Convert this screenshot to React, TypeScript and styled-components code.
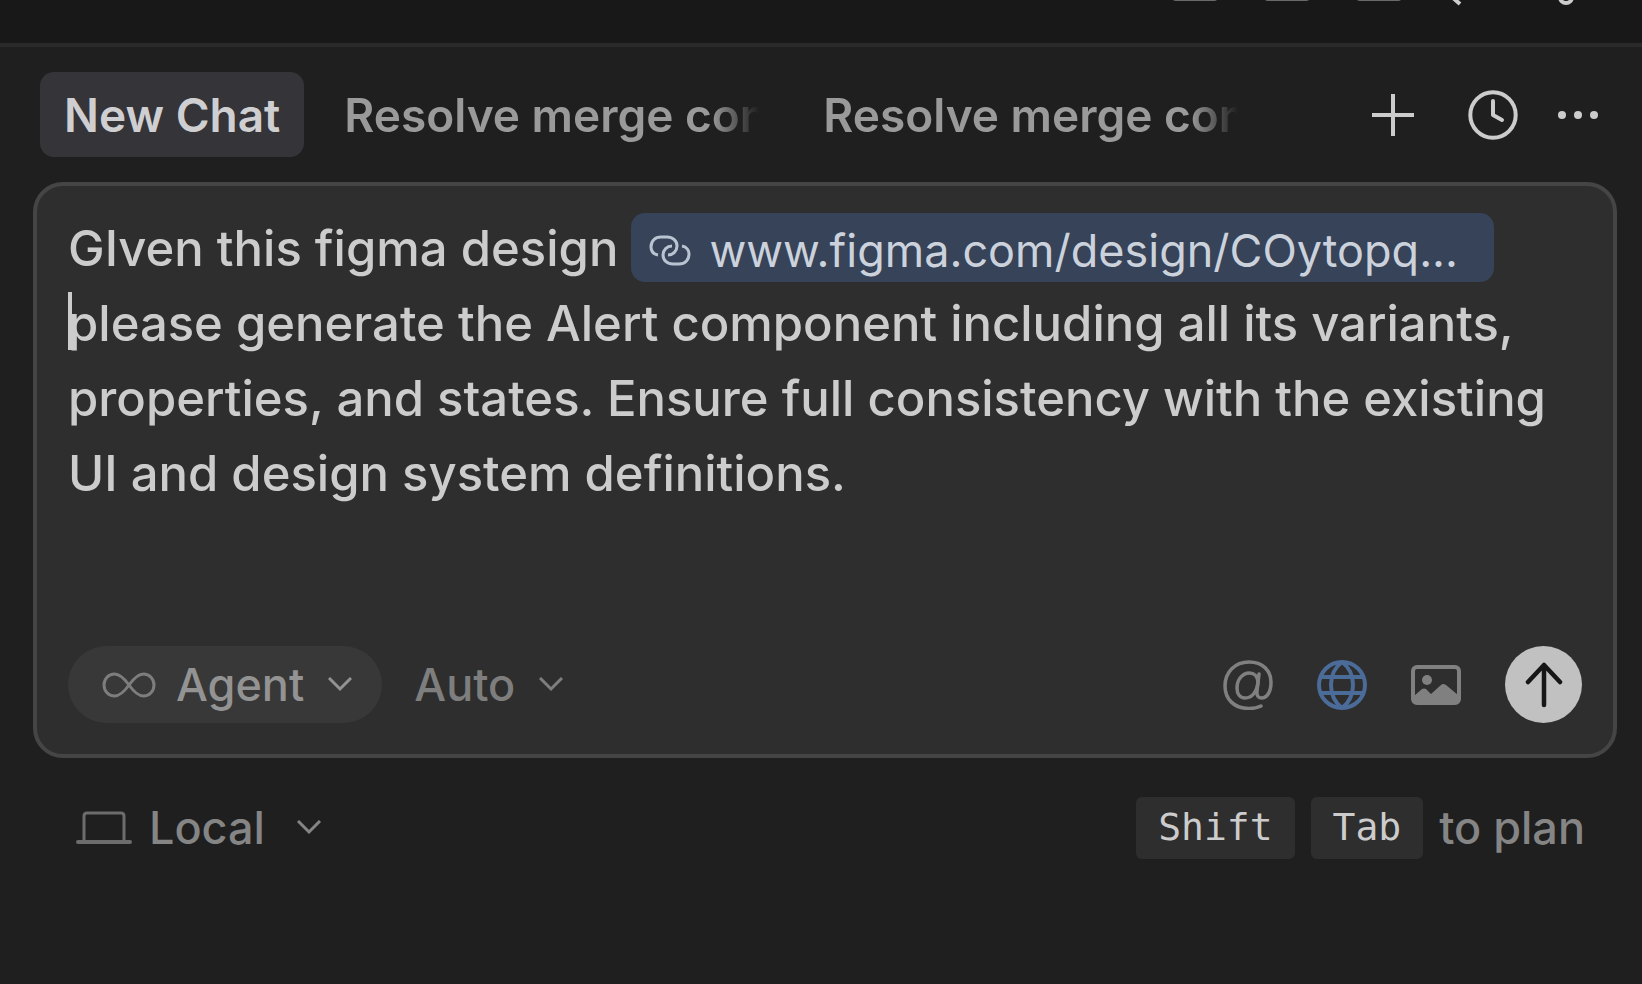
import React from "react";
import styled, { createGlobalStyle } from "styled-components";

const Global = createGlobalStyle`
  *, *::before, *::after { box-sizing: border-box; }
  html, body { margin: 0; background: #1f1f1f; }
  body { font-family: Inter, "Liberation Sans", sans-serif; color: #cccccc; }
  button, select { font: inherit; color: inherit; }
`;

const Page = styled.main`
  min-height: 100vh;
  display: flex;
  flex-direction: column;
  background: #1f1f1f;
`;

const TitleBar = styled.header`
  height: 47px;
  display: flex;
  justify-content: flex-end;
  align-items: flex-start;
  padding-right: 56px;
  background: #181818;
  border-bottom: 4px solid #2a2a2a;
`;

const PlainButton = styled.button<{ $color?: string; $width?: number }>`
  display: flex;
  align-items: center;
  justify-content: center;
  flex: none;
  width: ${(p) => (p.$width ? `${p.$width}px` : "auto")};
  padding: 0;
  border: 0;
  background: none;
  color: ${(p) => p.$color ?? "#cccccc"};
  cursor: pointer;
  svg { display: block; }
`;

const TitleIcons = styled.div`
  display: flex;
  gap: 46px;
`;

const TabBar = styled.nav`
  display: flex;
  align-items: center;
  justify-content: space-between;
  padding: 25px 44px 25px 40px;
`;

const Tabs = styled.div`
  display: flex;
  gap: 16px;
  min-width: 0;
`;

const Tab = styled.button<{ $active?: boolean }>`
  height: 85px;
  padding: 0 24px;
  border: 0;
  border-radius: 14px;
  background: ${(p) => (p.$active ? "#353439" : "transparent")};
  color: ${(p) => (p.$active ? "#cfcfd2" : "#9a9a9a")};
  font-size: 46px;
  font-weight: 600;
  line-height: 56px;
  cursor: pointer;
`;

const FadedLabel = styled.span`
  display: block;
  width: 415px;
  overflow: hidden;
  white-space: nowrap;
  text-align: left;
  mask-image: linear-gradient(to right, #000 calc(100% - 48px), transparent);
`;

const TabActions = styled.div`
  display: flex;
  align-items: center;
  gap: 40px;
`;

const Composer = styled.form`
  display: flex;
  flex-direction: column;
  justify-content: space-between;
  min-height: 576px;
  margin: 0 25px 0 33px;
  padding: 25px 31px 31px;
  border: 4px solid #454545;
  border-radius: 30px;
  background: #2e2e2e;
`;

const Editor = styled.div`
  font-size: 49px;
  font-weight: 500;
  line-height: 75px;
  outline: none;
`;

const Caret = styled.span`
  display: inline-block;
  width: 4px;
  height: 58px;
  margin-right: -4px;
  vertical-align: -9px;
  background: #cccccc;
`;

const LinkChip = styled.a`
  display: inline-flex;
  align-items: center;
  gap: 18px;
  height: 69px;
  margin-top: 2px;
  padding: 6px 36px 0 18px;
  border-radius: 14px;
  background: #364358;
  color: #ccd2dc;
  font-size: 45px;
  font-weight: 400;
  line-height: 63px;
  vertical-align: top;
  text-decoration: none;
`;

const ComposerBar = styled.div`
  display: flex;
  justify-content: space-between;
  align-items: center;
`;

const Group = styled.div<{ $gap: number }>`
  display: flex;
  align-items: center;
  gap: ${(p) => p.$gap}px;
`;

const Picker = styled.label<{ $pill?: boolean; $iconGap?: number; $chevronGap: number; $color: string }>`
  display: flex;
  align-items: center;
  height: 77px;
  padding: ${(p) => (p.$pill ? "0 30px 0 34px" : "0")};
  border-radius: 39px;
  background: ${(p) => (p.$pill ? "#383838" : "transparent")};
  color: ${(p) => p.$color};
  font-size: 45px;
  font-weight: 500;
  svg { flex: none; pointer-events: none; }
  svg:first-child { margin-right: ${(p) => p.$iconGap ?? 20}px; }
  svg:last-child { margin-left: ${(p) => p.$chevronGap}px; }
`;

const Select = styled.select`
  appearance: none;
  field-sizing: content;
  padding: 0;
  border: 0;
  outline: none;
  background: transparent;
  line-height: 56px;
  cursor: pointer;
`;

const SendButton = styled.button`
  display: flex;
  align-items: center;
  justify-content: center;
  width: 77px;
  height: 77px;
  padding: 0;
  border: 0;
  border-radius: 50%;
  background: #c1c1c1;
  color: #161616;
  cursor: pointer;
`;

const Footer = styled.footer`
  display: flex;
  justify-content: space-between;
  align-items: center;
  padding: 31px 57px 0 76px;
`;

const Hint = styled.div`
  display: flex;
  align-items: center;
  gap: 16px;
  color: #858585;
  font-size: 45px;
  font-weight: 500;
`;

const Key = styled.kbd`
  height: 62px;
  padding: 0 22px;
  border-radius: 6px;
  background: #2e2e2e;
  color: #cccccc;
  font-family: "DejaVu Sans Mono", monospace;
  font-size: 38px;
  font-weight: 400;
  line-height: 60px;
`;

const LayoutIcon = () => (
  <svg width="46" height="6" viewBox="0 0 46 6">
    <rect x="0" y="-8" width="46" height="9" rx="4" fill="#6a6a6a" />
  </svg>
);

const Chevron = () => (
  <svg width="24" height="16" viewBox="0 0 24 16" fill="none" stroke="currentColor" strokeWidth="3">
    <path d="M1 1 12 12 23 1" />
  </svg>
);

export default function App() {
  return (
    <Page>
      <Global />
      <TitleBar>
        <TitleIcons>
          <PlainButton aria-label="Toggle left panel"><LayoutIcon /></PlainButton>
          <PlainButton aria-label="Toggle bottom panel"><LayoutIcon /></PlainButton>
          <PlainButton aria-label="Toggle right panel"><LayoutIcon /></PlainButton>
          <PlainButton aria-label="Search">
            <svg width="46" height="6" viewBox="0 0 46 6" fill="none" stroke="currentColor" strokeWidth="4">
              <path d="M4-3 12 4" />
            </svg>
          </PlainButton>
          <PlainButton aria-label="Settings">
            <svg width="46" height="6" viewBox="0 0 46 6" fill="none" stroke="currentColor" strokeWidth="4">
              <circle cx="26" cy="-3" r="6" />
            </svg>
          </PlainButton>
        </TitleIcons>
      </TitleBar>

      <TabBar>
        <Tabs role="tablist">
          <Tab role="tab" aria-selected="true" $active>New Chat</Tab>
          <Tab role="tab" aria-selected="false"><FadedLabel>Resolve merge con</FadedLabel></Tab>
          <Tab role="tab" aria-selected="false"><FadedLabel>Resolve merge con</FadedLabel></Tab>
        </Tabs>
        <TabActions>
          <PlainButton aria-label="New chat" $width={70}>
            <svg width="42" height="42" viewBox="0 0 42 42" stroke="currentColor" strokeWidth="4">
              <path d="M21 0V42M0 21H42" />
            </svg>
          </PlainButton>
          <PlainButton aria-label="History">
            <svg width="50" height="50" viewBox="0 0 50 50" fill="none" stroke="currentColor" strokeWidth="4">
              <circle cx="25" cy="25" r="22.7" />
              <path d="M25 11V25L34 30" strokeLinecap="round" strokeLinejoin="round" />
            </svg>
          </PlainButton>
          <PlainButton aria-label="More">
            <svg width="40" height="8" viewBox="0 0 40 8" fill="currentColor">
              <circle cx="4" cy="4" r="4" /><circle cx="20" cy="4" r="4" /><circle cx="36" cy="4" r="4" />
            </svg>
          </PlainButton>
        </TabActions>
      </TabBar>

      <Composer onSubmit={(e) => e.preventDefault()}>
        <Editor role="textbox" aria-multiline="true" aria-label="Message" contentEditable suppressContentEditableWarning>
          GIven this figma design{" "}
          <LinkChip href="#design" contentEditable={false}>
            <svg width="42" height="32" viewBox="0 0 42 32" fill="none" stroke="#b9c3d1" strokeWidth="3">
              <path d="M9 20C4 19 2 16 2 12C2 6 6 2 12 2H18C24 2 28 6 28 11C28 16 24 20 19 20" />
              <path d="M33 11C38 12 40 16 40 19C40 25 36 29 30 29H24C18 29 14 25 14 20C14 15 18 11 23 11" />
            </svg>
            www.figma.com/design/COytopq...
          </LinkChip>
          <br />
          <Caret />please generate the Alert component including all its variants, properties, and states. Ensure full consistency with the existing UI and design system definitions.
        </Editor>

        <ComposerBar>
          <Group $gap={32}>
            <Picker $pill $chevronGap={24} $color="#939393">
              <svg width="54" height="26" viewBox="0 0 54 26" fill="none" stroke="#7d7d7d" strokeWidth="3">
                <path d="M27 13C22 6 18 2 12.500 2C6.500 2 2 7 2 13S6.500 24 12.500 24C18 24 22 20 27 13C32 6 36 2 41.500 2C47.500 2 52 7 52 13S47.500 24 41.500 24C36 24 32 20 27 13Z" />
              </svg>
              <Select aria-label="Mode" defaultValue="Agent"><option>Agent</option></Select>
              <Chevron />
            </Picker>
            <Picker $chevronGap={24} $color="#7e7e7e">
              <Select aria-label="Model" defaultValue="Auto"><option>Auto</option></Select>
              <Chevron />
            </Picker>
          </Group>
          <Group $gap={44}>
            <PlainButton type="button" aria-label="Mention" $color="#808080">
              <svg width="50" height="50" viewBox="0 0 50 50" fill="none" stroke="currentColor" strokeWidth="3.500" strokeLinecap="round">
                <path d="M38 46C34 48 30 48.500 26 48.500C11 48.500 2 39 2 26C2 12 12 2 26 2C40 2 48 11 48 22C48 32 44 38 38.500 38C35 38 33.500 35.500 34 31L36 14" />
                <path d="M35 22C34.500 16 31 13 26.500 13C19 13 14 20 14 28C14 34 17 38 22 38C29 38 34 32 35 22Z" />
              </svg>
            </PlainButton>
            <PlainButton type="button" aria-label="Web" $color="#4b6b99">
              <svg width="50" height="50" viewBox="0 0 50 50" fill="none" stroke="currentColor" strokeWidth="4">
                <circle cx="25" cy="25" r="23" />
                <path d="M25 2C17 8 14 16 14 25S17 42 25 48C33 42 36 34 36 25S33 8 25 2ZM4 17H46M4 33H46" />
              </svg>
            </PlainButton>
            <PlainButton type="button" aria-label="Attach image" $color="#808080">
              <svg width="50" height="40" viewBox="0 0 50 40">
                <rect x="2" y="2" width="46" height="36" rx="4" fill="none" stroke="currentColor" strokeWidth="4" />
                <circle cx="16" cy="15" r="5" fill="currentColor" />
                <path d="M3 31 11 24Q13 23 15 24L20 29 30 20Q32 18 35 20L47 30V37H3Z" fill="currentColor" />
              </svg>
            </PlainButton>
            <SendButton type="submit" aria-label="Send">
              <svg width="38" height="46" viewBox="0 0 38 46" fill="none" stroke="currentColor" strokeWidth="4.500" strokeLinecap="round" strokeLinejoin="round">
                <path d="M19 43V3M3 20 19 3 35 20" />
              </svg>
            </SendButton>
          </Group>
        </ComposerBar>
      </Composer>

      <Footer>
        <Picker $iconGap={17} $chevronGap={32} $color="#858585">
          <svg width="56" height="34" viewBox="0 0 56 34" fill="none" stroke="#6c6c6c" strokeWidth="3">
            <path d="M8 30V5Q8 2 11 2H45Q48 2 48 5V30" />
            <path d="M2 31H54" strokeWidth="4" strokeLinecap="round" />
          </svg>
          <Select aria-label="Environment" defaultValue="Local"><option>Local</option></Select>
          <Chevron />
        </Picker>
        <Hint><Key>Shift</Key><Key>Tab</Key><span>to plan</span></Hint>
      </Footer>
    </Page>
  );
}
